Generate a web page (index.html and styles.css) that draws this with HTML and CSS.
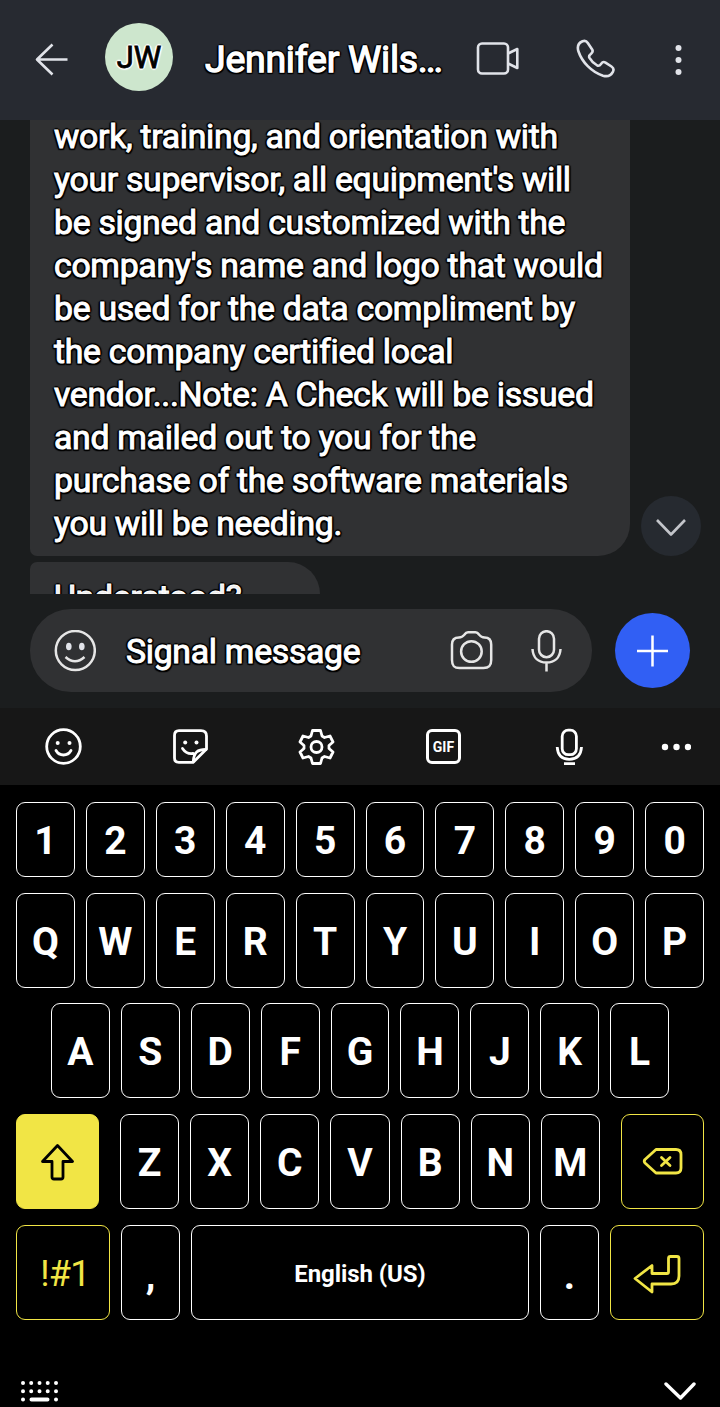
FILE: index.html
```
<!DOCTYPE html>
<html lang="en">
<head>
    <meta charset="utf-8">
    <title>Jennifer Wilson</title>
    <link rel="stylesheet" href="styles.css">
</head>
<body>
    <header class="header">
        <svg class="back" width="34" height="34" viewBox="35 42 34 34"><path d="M67.5 59.5H37.500M52.500 44.500L37 59.500L52.500 74.500"/></svg>
        <div class="avatar">JW</div>
        <h1 class="name">Jennifer Wils…</h1>
        <svg class="video" width="44" height="36" viewBox="476 41 44 36"><rect x="478" y="43.500" width="30" height="30" rx="4"/><path d="M508 53.500L517.300 49V68L508 63.500"/></svg>
        <svg class="phone" width="40" height="40" viewBox="576 39 40 40"><path d="M582.500 41.300C584.500 40.500 586.500 41 587.800 43L592 49.200C593.200 51 592.800 52.200 591.300 53.400C589.300 55 588.600 56 589.300 57.600C591.200 61 594.200 63.700 597.300 65.500C598.800 66.300 600 65.400 601.200 63.700C602.500 61.800 603.800 61.500 605.500 62.600L611.500 66.500C613.600 67.900 614 69.700 612.900 71.800C611 75.400 607.500 77 603 75.700C591.500 72 582 62 578.500 51.500C577 46.800 578.500 43 582.500 41.300Z"/></svg>
        <svg class="menu" width="8" height="32" viewBox="0 0 8 32"><circle cx="3.500" cy="4" r="3"/><circle cx="3.500" cy="16" r="3"/><circle cx="3.500" cy="28" r="3"/></svg>
    </header>

    <main class="chat">
        <p class="bubble first">work, training, and orientation with<br>your supervisor, all equipment's will<br>be signed and customized with the<br>company's name and logo that would<br>be used for the data compliment by<br>the company certified local<br>vendor...Note: A Check will be issued<br>and mailed out to you for the<br>purchase of the software materials<br>you will be needing.</p>
        <p class="bubble second">Understood?</p>
        <button class="scroll-down" aria-label="Scroll to bottom">
            <svg width="32" height="20" viewBox="0 0 32 20"><path d="M2 2L16 16.500L30 2"/></svg>
        </button>
    </main>

    <div class="compose">
        <div class="input">
            <svg class="emoji" width="42" height="42" viewBox="0 0 42 42"><circle cx="21.300" cy="20.500" r="19.500"/><path d="M11.500 27Q21 35.500 30.500 27"/><ellipse class="dot" cx="14.800" cy="16.500" rx="2.800" ry="3.800"/><ellipse class="dot" cx="27.800" cy="16.500" rx="2.800" ry="3.800"/></svg>
            <span class="placeholder">Signal message</span>
            <svg class="camera" width="44" height="42" viewBox="450 630 44 42"><path d="M459 637.500C462.500 637.500 463 636.500 464.500 634.500C465.500 633 466.200 632.300 468 632.300H475.500C477.300 632.300 478 633 479 634.500C480.500 636.500 481 637.500 484.500 637.500C489 637.500 491.200 640 491.200 644.500V660C491.200 666 489 668 483.500 668H459.500C454 668 452 666 452 660V644.500C452 640 454.500 637.500 459 637.500Z"/><circle cx="471.400" cy="651.500" r="10.300"/></svg>
            <svg class="mic" width="32" height="42" viewBox="531 630 32 42"><rect x="539" y="631.200" width="15" height="26" rx="7.500"/><path d="M532.500 649C533 658 538.500 662.500 546.500 662.500S560 658 560.500 649M546.500 662.500V671.500"/></svg>
        </div>
        <button class="plus" aria-label="Attach">
            <svg width="32" height="32" viewBox="0 0 32 32"><path d="M15.500 .500V31.500M0 16H31"/></svg>
        </button>
    </div>

    <div class="toolbar">
        <svg class="tool" width="38" height="38" viewBox="0 0 38 38"><circle cx="19.500" cy="18.500" r="16.800"/><path d="M12 22.500C15.500 28.500 23.500 28.500 27 22.500"/><circle class="dot" cx="13.700" cy="15" r="2"/><circle class="dot" cx="25.500" cy="15" r="2"/></svg>
        <svg class="tool" width="38" height="38" viewBox="171 728 38 38"><path d="M179 730.600H201Q206.500 730.600 206.500 736V749L193 762.400H179Q174.500 762.400 174.500 758V735.500Q174.500 730.600 179 730.600Z"/><path d="M182.500 748.500Q186.500 754.500 193 753.500M193.300 761.500C193.800 752 197.500 749.500 206 749.500"/><circle class="dot" cx="185.200" cy="742.500" r="2"/><circle class="dot" cx="196.500" cy="742.500" r="2"/></svg>
        <svg class="tool gear" width="38" height="38" viewBox="-18.500 -19 38 38"><path d="M-4 -16.500H4L5.500 -11L8 -9.500L13.500 -11L16.500 -5L12.500 -1.500V1.500L16.500 5L13.500 11L8 9.500L5.500 11L4 16.500H-4L-5.500 11L-8 9.500L-13.500 11L-16.500 5L-12.500 1.500V-1.500L-16.500 -5L-13.500 -11L-8 -9.500L-5.500 -11Z"/><circle cx="0" cy="0" r="5.500"/></svg>
        <div class="gif">GIF</div>
        <svg class="tool" width="38" height="38" viewBox="550 728 38 38"><rect x="562.200" y="730.200" width="14.200" height="24.500" rx="6"/><path class="butt" d="M557.200 747C557.700 755.500 562.500 759.300 569.300 759.300S581 755.500 581.500 747M564 763.700H575"/></svg>
        <svg class="more" width="30" height="8" viewBox="0 0 30 8"><circle cx="4" cy="4" r="3.200"/><circle cx="15.500" cy="4" r="3.200"/><circle cx="27" cy="4" r="3.200"/></svg>
    </div>

    <div class="keyboard">
        <div class="row numbers">
            <button class="key">1</button><button class="key">2</button><button class="key">3</button><button class="key">4</button><button class="key">5</button><button class="key">6</button><button class="key">7</button><button class="key">8</button><button class="key">9</button><button class="key">0</button>
        </div>
        <div class="row">
            <button class="key">Q</button><button class="key">W</button><button class="key">E</button><button class="key">R</button><button class="key">T</button><button class="key">Y</button><button class="key">U</button><button class="key">I</button><button class="key">O</button><button class="key">P</button>
        </div>
        <div class="row home">
            <button class="key">A</button><button class="key">S</button><button class="key">D</button><button class="key">F</button><button class="key">G</button><button class="key">H</button><button class="key">J</button><button class="key">K</button><button class="key">L</button>
        </div>
        <div class="row">
            <button class="key side shift" aria-label="Shift">
                <svg width="34" height="38" viewBox="40 1143 34 38"><path d="M57.500 1145.500L72.500 1161.500H63V1177Q63 1179 61 1179H54Q52 1179 52 1177V1161.500H42.500Z"/></svg>
            </button>
            <button class="key">Z</button><button class="key">X</button><button class="key">C</button><button class="key">V</button><button class="key">B</button><button class="key">N</button><button class="key">M</button>
            <button class="key side delete" aria-label="Delete">
                <svg width="42" height="30" viewBox="642 1147 42 30"><path d="M656 1149.500H676Q681 1149.500 681 1154.500V1168Q681 1173 676 1173H656L645 1163Q643.500 1161.300 645 1159.500Z"/><path d="M661.500 1157.500L670 1165.500M670 1157.500L661.500 1165.500"/></svg>
            </button>
        </div>
        <div class="row">
            <button class="key wide symbols">!#1</button>
            <button class="key comma">,</button>
            <button class="key space">English (US)</button>
            <button class="key period">.</button>
            <button class="key wide enter" aria-label="Enter">
                <svg width="50" height="42" viewBox="632 1253 50 42"><path d="M670.500 1256.500H677Q679 1256.500 679 1258.500V1276Q679 1284 671 1284H652V1292L635 1278.500L652 1265.500V1273.500H667Q668.500 1273.500 668.500 1272V1258.500Q668.500 1256.500 670.500 1256.500Z"/></svg>
            </button>
        </div>
        <div class="nav">
            <svg width="38" height="22" viewBox="0 0 38 22"><path class="dots" d="M2 2h.01M10.200 2h.01M18.500 2h.01M26.700 2h.01M35 2h.01M2 10.300h.01M10.200 10.300h.01M18.500 10.300h.01M26.700 10.300h.01M35 10.300h.01M2 18.500h.01M10.500 18.500h16M35 18.500h.01"/></svg>
            <svg width="32" height="20" viewBox="0 0 32 20"><path class="hide" d="M2 3L16.500 17L30 3"/></svg>
        </div>
    </div>
</body>
</html>
```
FILE: styles.css
```
* { box-sizing: border-box; }
body {
    margin: 0; width: 720px; height: 1407px; overflow: hidden;
    background: #1b1d1e; color: #fff;
    font-family: Roboto, "Liberation Sans", sans-serif;
}
button { padding: 0; margin: 0; font-family: inherit; color: inherit; }
svg { display: block; flex: none; fill: none; stroke: #e1e3e9; stroke-width: 2.5; stroke-linejoin: round; }

/* black outline round the message text */
.name, .bubble, .placeholder {
    letter-spacing: -0.28px;
    text-shadow: -1.5px -1.5px 1px #000, 1.5px -1.5px 1px #000, -1.5px 1.5px 1px #000, 1.5px 1.5px 1px #000,
        0 -2px 1px #000, 0 2px 1px #000, -2px 0 1px #000, 2px 0 1px #000;
    -webkit-text-stroke: 1px #fff;
}

.header { display: flex; align-items: center; height: 120px; padding: 0 37px 0 35px; background: #272a31; }
.avatar {
    width: 68px; height: 68px; margin: -6px 0 0 36px; border-radius: 50%;
    background: #cde6cd; color: #000; font-size: 31px; line-height: 69px; text-align: center;
    text-shadow: -1px -1px 1px #fff, 1px -1px 1px #fff, -1px 1px 1px #fff, 1px 1px 1px #fff,
        0 -2px 1px #fff, 0 2px 1px #fff, -2px 0 1px #fff, 2px 0 1px #fff;
    -webkit-text-stroke: 0.8px #000;
}
.name { margin: -2px 0 0 32px; width: 271px; font-size: 37.5px; font-weight: 400; line-height: 48px; white-space: nowrap; -webkit-text-stroke-width: 1.3px; }
.back { margin-top: -3px; }
.back, .video, .phone { stroke-width: 2.6; }
.video { margin-top: -2px; }
.phone { margin: -2px 0 0 56px; }
.menu { margin: -1px 0 0 auto; fill: #e1e3e9; stroke: none; }

.chat { position: relative; height: 474px; padding-left: 30px; overflow: hidden; }
.bubble {
    margin: 0; padding: 0 24px; background: #303133;
    font-size: 33.75px; line-height: 43px; white-space: nowrap;
}
.first { width: 600px; height: 441px; margin-top: -5px; border-radius: 0 0 32px 7px; }
.second { width: 290px; height: 69px; margin-top: 6px; padding-top: 14px; border-radius: 7px 32px 32px 32px; color: #eee; }
.scroll-down {
    position: absolute; right: 19px; bottom: 38px; width: 60px; height: 60px;
    display: flex; align-items: center; justify-content: center;
    border: none; border-radius: 50%; background: #262a30;
}
.scroll-down svg { stroke: #c3c5ca; stroke-width: 2.6; margin-top: 3px; }

.compose { display: flex; align-items: center; height: 114px; padding: 0 30px 1px; }
.input { display: flex; align-items: center; width: 562px; height: 83px; padding: 0 29px 0 24px; border-radius: 41px; background: #303133; }
.placeholder { flex: 1; margin-left: 30px; font-size: 33.75px; line-height: 43px; padding-top: 1px; }
.emoji .dot { fill: #e1e3e9; stroke: none; }
.emoji, .camera, .mic { stroke: #e6e6e6; }
.mic { margin-left: 37px; }
.plus {
    display: flex; align-items: center; justify-content: center;
    width: 75px; height: 75px; margin-left: 23px; border: none; border-radius: 50%; background: #315ff4;
}
.plus svg { stroke: #fff; }

.toolbar { display: flex; align-items: center; height: 77px; padding: 0 28px 0 44px; background: #171717; }
.tool { margin-right: 89px; stroke: #fff; stroke-width: 2.8; stroke-linecap: round; }
.tool .dot { fill: #fff; stroke: none; }
.tool .butt { stroke-linecap: butt; }
.gif {
    width: 35px; height: 35px; margin-right: 89px; margin-left: 1px;
    border: 3px solid #fff; border-radius: 6px;
    font-size: 14px; font-weight: 700; line-height: 31px; text-align: center;
}
.more { margin-left: -16px; fill: #fff; stroke: none; }

.keyboard { display: flex; flex-direction: column; height: 622px; padding: 17px 16px 0; gap: 15.7px; background: #000; }
.row { display: flex; gap: 11px; height: 95px; }
.numbers { height: 75px; }
.home { padding: 0 35px; }
.key {
    display: flex; align-items: center; justify-content: center; flex: 1;
    padding: 3px 0 0;
    border: 1px solid #fff; border-radius: 9px; background: #000;
    font-size: 39px; font-weight: 700; line-height: 46px;
}
.side { flex: none; width: 83px; padding: 0; border-color: #f1e545; }
.side svg, .enter svg { stroke: #f1e545; stroke-width: 2.8; }
.shift { margin-right: 10px; background: #f1e545; }
.shift svg { margin-right: 2px; stroke: #000; }
.delete { margin-left: 10px; }
.delete svg { margin-left: 1px; stroke-linecap: round; }
.wide { flex: none; width: 94px; border-color: #f1e545; }
.symbols { padding-left: 4px; color: #f1e545; font-size: 36px; font-weight: 400; letter-spacing: -0.8px; }
.comma, .period { padding-top: 8px; }
.enter { padding-right: 1px; }
.space { flex: none; width: 338px; font-size: 24px; letter-spacing: -0.1px; }
.nav { display: flex; justify-content: space-between; padding: 46px 8px 0 5px; }
.dots { stroke: #fff; stroke-width: 4; stroke-linecap: round; }
.hide { stroke: #fff; stroke-width: 3.4; stroke-linecap: round; }
```
